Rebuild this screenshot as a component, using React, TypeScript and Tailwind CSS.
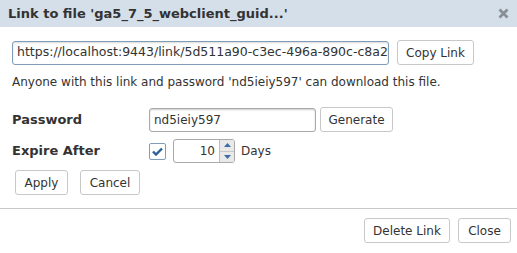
import React from "react";

const font = { fontFamily: '"DejaVu Sans", Verdana, sans-serif' };

function Btn({ children, className = "" }: { children: React.ReactNode; className?: string }) {
  return (
    <button
      className={`h-[25px] rounded-[3px] border border-[#c8c8c8] bg-white text-[12px] text-[#333] ${className}`}
    >
      {children}
    </button>
  );
}

export default function App() {
  return (
    <div className="w-[517px] h-[253px] bg-white text-[#333] text-[12px] flex flex-col" style={font}>
      <div className="h-[27px] bg-[#d5dfea] flex items-center justify-between pl-[8px] pr-[6px]">
        <span className="font-bold text-[13px] text-[#333]">Link to file 'ga5_7_5_webclient_guid...'</span>
        <svg width="11" height="11" viewBox="0 0 11 11" className="mr-[2px]">
          <path d="M1.5 1.5 L9.5 9.5 M9.5 1.5 L1.5 9.5" stroke="#8a8f96" strokeWidth="2.8" strokeLinecap="butt" />
        </svg>
      </div>
      <div className="flex flex-col pl-[12px] pt-[13px]">
        <div className="flex items-center gap-[8px]">
          <div className="w-[377px] h-[24px] border border-[#7f9db9] rounded-[3px] flex items-center pl-[4px] overflow-hidden whitespace-nowrap text-[12.5px] shadow-[inset_0_1px_2px_rgba(0,0,0,0.15)]">
            https://localhost:9443/link/5d511a90-c3ec-496a-890c-c8a21f
          </div>
          <Btn className="w-[77px]">Copy Link</Btn>
        </div>
        <div className="mt-[9px] h-[16px] leading-[16px]">
          Anyone with this link and password 'nd5ieiy597' can download this file.
        </div>
        <div className="mt-[17px] flex items-center h-[25px]">
          <span className="w-[137px] font-bold text-[13px]">Password</span>
          <div className="w-[167px] h-[24px] border border-[#a9a9a9] rounded-[3px] flex items-center pl-[4px] shadow-[inset_0_1px_2px_rgba(0,0,0,0.2)]">
            nd5ieiy597
          </div>
          <Btn className="ml-[4px] w-[73px]">Generate</Btn>
        </div>
        <div className="mt-[7px] flex items-center h-[24px]">
          <span className="w-[137px] font-bold text-[13px]">Expire After</span>
          <div className="w-[17px] h-[17px] border border-[#7f9db9] rounded-[2px] flex items-center justify-center">
            <svg width="11" height="9" viewBox="0 0 11 9">
              <path d="M1 4.5 L4 7.5 L10 1.5" stroke="#2b5f9a" strokeWidth="2.4" fill="none" />
            </svg>
          </div>
          <div className="ml-[7px] w-[62px] h-[24px] border border-[#a9a9a9] rounded-[3px] flex overflow-hidden">
            <div className="flex-1 flex items-center justify-end pr-[4px]">10</div>
            <div className="w-[15px] flex flex-col bg-[#e9e9e9] border-l border-[#bdbdbd]">
              <div className="flex-1 flex items-center justify-center border-b border-[#c8c8c8]">
                <svg width="7" height="4" viewBox="0 0 7 4"><path d="M0 4 L3.5 0 L7 4Z" fill="#3a6ea5" /></svg>
              </div>
              <div className="flex-1 flex items-center justify-center">
                <svg width="7" height="4" viewBox="0 0 7 4"><path d="M0 0 L3.5 4 L7 0Z" fill="#3a6ea5" /></svg>
              </div>
            </div>
          </div>
          <span className="ml-[6px]">Days</span>
        </div>
        <div className="mt-[7px] flex gap-[12px] pl-[3px]">
          <Btn className="w-[53px]">Apply</Btn>
          <Btn className="w-[60px]">Cancel</Btn>
        </div>
      </div>
      <div className="mt-[13px] border-t border-[#c8c8c8]" />
      <div className="mt-[9px] flex justify-end gap-[8px] pr-[6px]">
        <Btn className="w-[86px]">Delete Link</Btn>
        <Btn className="w-[53px]">Close</Btn>
      </div>
    </div>
  );
}
